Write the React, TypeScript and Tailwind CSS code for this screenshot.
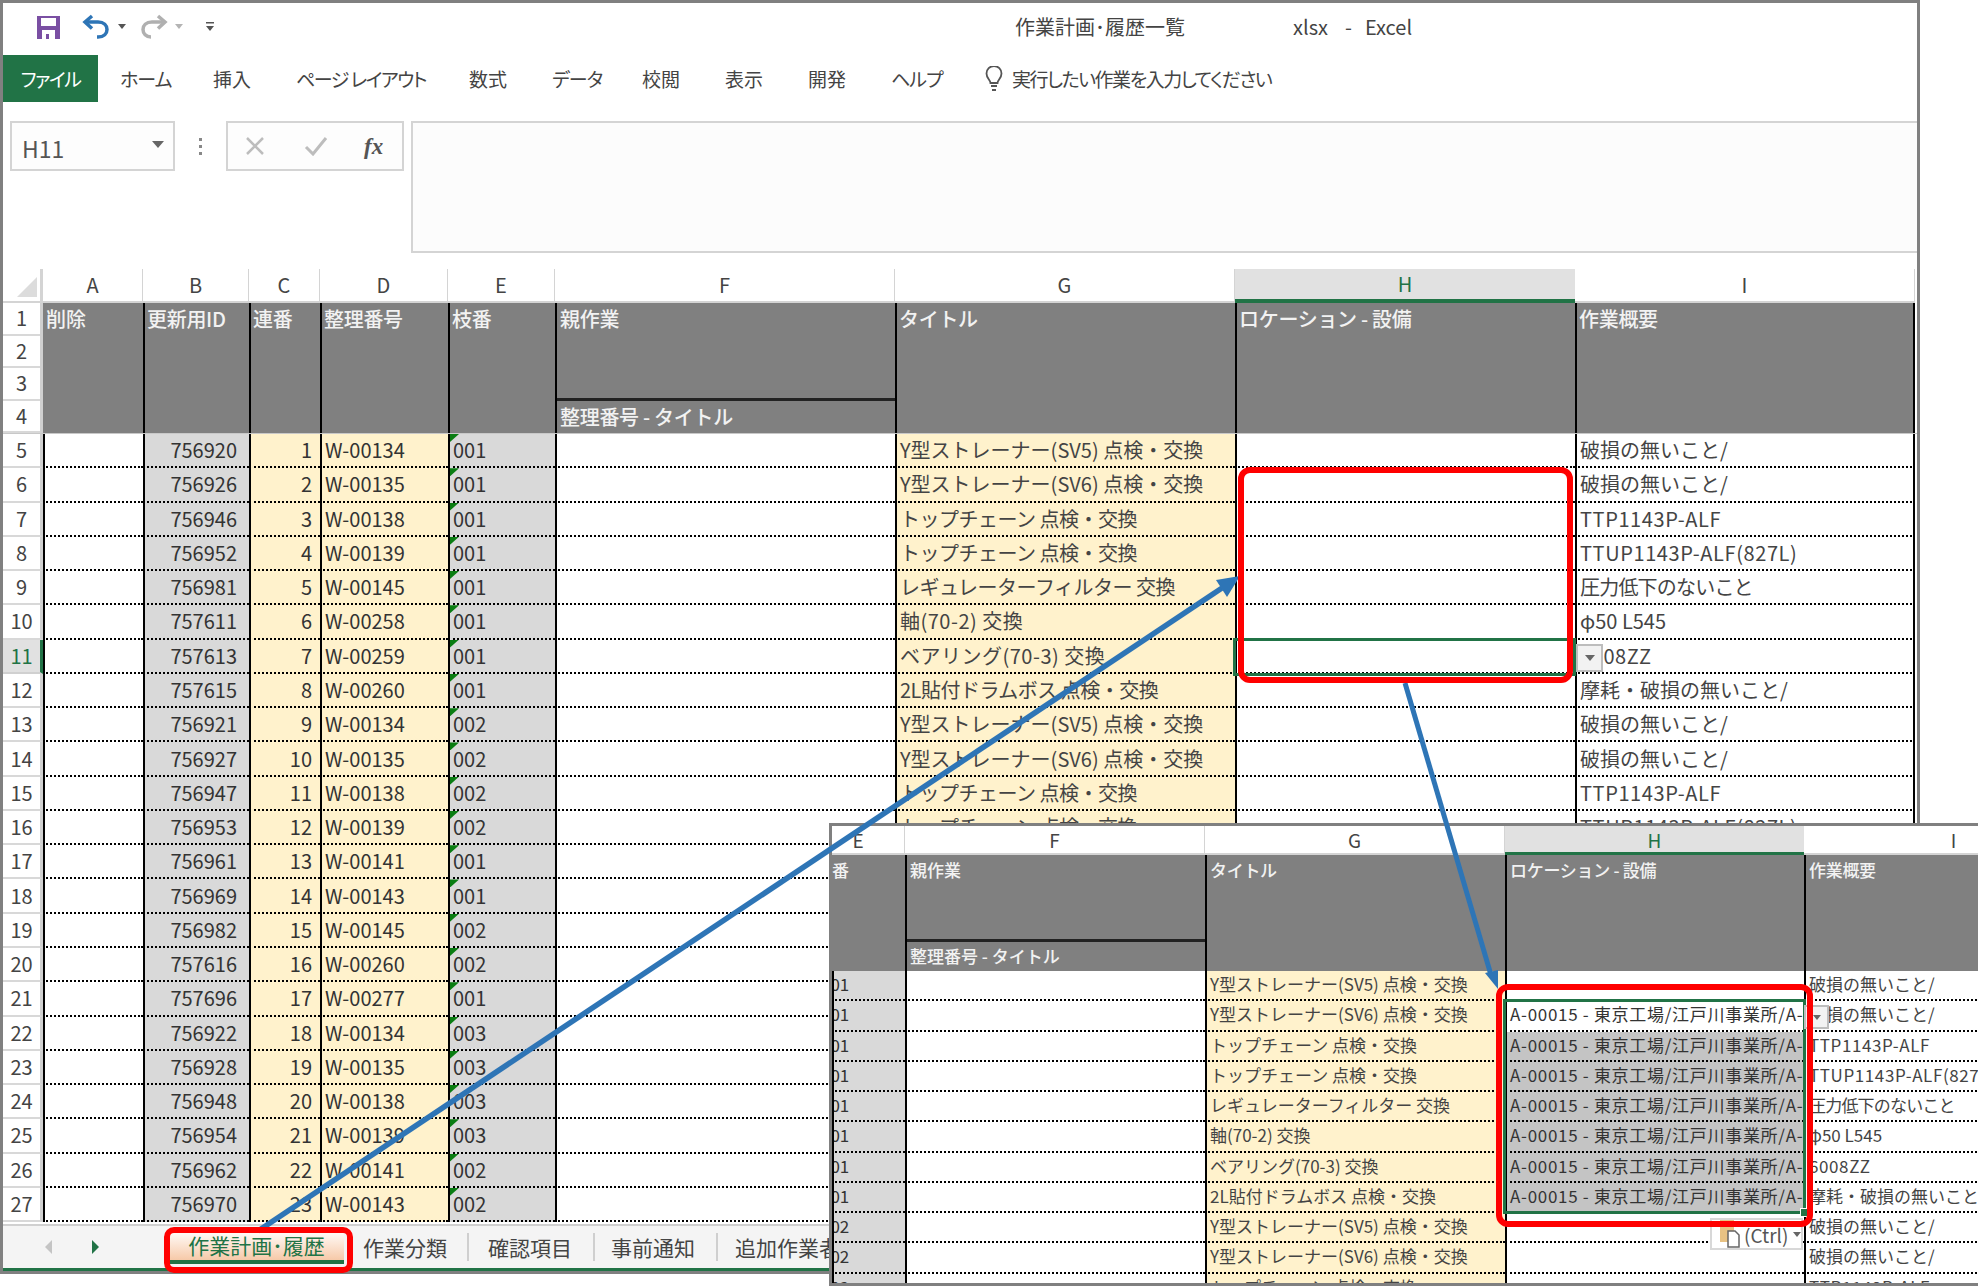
import React from "react";

const SV5 = "Y型ストレーナー(SV5) 点検・交換";
const SV6 = "Y型ストレーナー(SV6) 点検・交換";
const TOP = "トップチェーン 点検・交換";
const REG = "レギュレーターフィルター 交換";
const JIKU = "軸(70-2) 交換";
const BEAR = "ベアリング(70-3) 交換";
const DRUM = "2L貼付ドラムボス 点検・交換";
const OK = "破損の無いこと/";
const TTP = "TTP1143P-ALF";
const TTUP = "TTUP1143P-ALF(827L)";
const ATSU = "圧力低下のないこと";
const PHI = "φ50 L545";
const BRG = "6008ZZ";
const MAMO = "摩耗・破損の無いこと/";
const LOC = "A-00015 - 東京工場/江戸川事業所/A-00001";

const rows: [number, number, string, string, string, string][] = [
  [756920, 1, "W-00134", "001", SV5, OK],
  [756926, 2, "W-00135", "001", SV6, OK],
  [756946, 3, "W-00138", "001", TOP, TTP],
  [756952, 4, "W-00139", "001", TOP, TTUP],
  [756981, 5, "W-00145", "001", REG, ATSU],
  [757611, 6, "W-00258", "001", JIKU, PHI],
  [757613, 7, "W-00259", "001", BEAR, BRG],
  [757615, 8, "W-00260", "001", DRUM, MAMO],
  [756921, 9, "W-00134", "002", SV5, OK],
  [756927, 10, "W-00135", "002", SV6, OK],
  [756947, 11, "W-00138", "002", TOP, TTP],
  [756953, 12, "W-00139", "002", TOP, TTUP],
  [756961, 13, "W-00141", "001", "", ""],
  [756969, 14, "W-00143", "001", "", ""],
  [756982, 15, "W-00145", "002", "", ""],
  [757616, 16, "W-00260", "002", "", ""],
  [757696, 17, "W-00277", "001", "", ""],
  [756922, 18, "W-00134", "003", "", ""],
  [756928, 19, "W-00135", "003", "", ""],
  [756948, 20, "W-00138", "003", "", ""],
  [756954, 21, "W-00139", "003", "", ""],
  [756962, 22, "W-00141", "002", "", ""],
  [756970, 23, "W-00143", "002", "", ""],
];

const menu: [string, string][] = [
  ["ホーム", "w-[49px] tracking-[-1px]"],
  ["挿入", "w-[39px]"],
  ["ページ レイアウト", "w-[129px] tracking-[-1.500px]"],
  ["数式", "w-[39px]"],
  ["データ", "w-[46px] tracking-[-1px]"],
  ["校閲", "w-[39px]"],
  ["表示", "w-[39px]"],
  ["開発", "w-[39px]"],
  ["ヘルプ", "w-[48px] tracking-[-1px]"],
];

const cols = "grid grid-cols-[40px_100px_106px_71px_128px_107px_340px_340px_340px_340px]";
const ocols = "grid grid-cols-[73px_300px_300px_299px_300px]";
const colHead = "flex items-center justify-center border-r border-b-2 border-[#d4d4d4] text-[#444]";
const hdr = "bg-[#808080] border-l-2 border-black text-[#f2f2f2] font-medium px-[2px] [font-feature-settings:normal] tracking-[-0.300px]";
const cell = "border-l-2 border-b-2 border-l-black border-b-black [border-bottom-style:dotted] flex items-center overflow-hidden whitespace-nowrap px-[2px] [font-feature-settings:normal]";

function summaryTracking(t: string) {
  if (t === ATSU) return "tracking-[-0.800px]";
  if (/^[\x00-\x7f]+$/.test(t)) return "tracking-[0.600px]";
  return "";
}

function titleTracking(t: string) {
  if (t.startsWith("Y型")) return "tracking-[0px]";
  if (t.includes("(")) return "tracking-[0.500px]";
  return "tracking-[-0.500px]";
}

function QuickAccess() {
  return (
    <svg width="190" height="26" viewBox="0 0 190 26" className="shrink-0">
      <path d="M0 2h23v23H0z" fill="#7a4fa3" />
      <path d="M4 4h15v8H4z" fill="#fff" />
      <path d="M5 16h13v9H5z" fill="#fff" />
      <path d="M9 20h3v5H9z" fill="#7a4fa3" />
      <path d="M55 2l-7 6 7 6.500" fill="none" stroke="#2e75b6" strokeWidth="3.500" />
      <path d="M49 8h12c6 0 9 3.500 9 7.500s-3 7.500-9 7.500h-1" fill="none" stroke="#2e75b6" strokeWidth="3.500" />
      <path d="M81 10h8l-4 5z" fill="#555" />
      <path d="M121 2l7 6-7 6.500" fill="none" stroke="#b0b0b0" strokeWidth="3.500" />
      <path d="M127 8h-12c-6 0-9 3.500-9 7.500s3 7.500 8 7.500" fill="none" stroke="#b0b0b0" strokeWidth="3.500" />
      <path d="M138 10h8l-4 5z" fill="#b4b4b4" />
      <path d="M169 8h8v1.500h-8zM169 12h8l-4 5z" fill="#555" />
    </svg>
  );
}

function Bulb() {
  return (
    <svg width="20" height="26" viewBox="0 0 20 26" className="shrink-0">
      <path d="M6.500 17c0-3-4-4.500-4-9.500a7.500 7.500 0 0 1 15 0c0 5-4 6.500-4 9.500z" fill="none" stroke="#555" strokeWidth="1.800" />
      <path d="M7 20h6M8 24h4" stroke="#555" strokeWidth="2" />
    </svg>
  );
}

function Row({ r, idx }: { r: (typeof rows)[number]; idx: number }) {
  const n = idx + 5;
  const active = n === 11;
  return (
    <div className={`${cols} h-[34.27px]`}>
      <div className={active
        ? "flex items-center justify-center bg-[#e1e1e1] text-[#217346] border-b-2 border-[#d0d0d0] border-r-[3px] border-r-[#217346]"
        : "flex items-center justify-center text-[#444] border-b-2 border-[#d8d8d8] border-r-[3px] border-r-[#d0d0d0]"}>
        {n}
      </div>
      <div className={`${cell} border-l-0 bg-white`} />
      <div className={`${cell} justify-end bg-[#d9d9d9] text-[#333] pr-[12px]`}>{r[0]}</div>
      <div className={`${cell} justify-end bg-[#fff2cc] text-[#333] pr-[8px]`}>{r[1]}</div>
      <div className={`${cell} bg-[#fff2cc] text-[#333] pl-[3px]`}>{r[2]}</div>
      <div className={`${cell} relative bg-[#d9d9d9] text-[#333] pl-[3px]`}>
        <span className="absolute left-0 top-0 w-[9px] h-[8px] bg-[#0a7d12] [clip-path:polygon(0_0,100%_0,0_100%)]" />
        {r[3]}
      </div>
      <div className={`${cell} bg-white`} />
      <div className={`${cell} bg-[#fff2cc] text-[#444] pl-[3px] ${titleTracking(r[4])}`}>{r[4]}</div>
      <div className={`${cell} bg-white`} />
      <div className={`${cell} bg-white text-[#444] border-r-2 border-r-black pl-[3px] ${summaryTracking(r[5])}`}>{r[5]}</div>
    </div>
  );
}

function OverlayRow({ r, idx }: { r: (typeof rows)[number]; idx: number }) {
  const loc = idx >= 1 && idx <= 7;
  const grey = idx >= 2 && idx <= 7;
  const c = "border-l-2 border-b-2 border-l-black border-b-black [border-bottom-style:dotted] flex items-center overflow-hidden whitespace-nowrap pl-[3px] pb-[3px] [font-feature-settings:normal]";
  return (
    <div className={`${ocols} h-[30.25px]`}>
      <div className={`${c} border-l-0 bg-[#d9d9d9] text-[#333] pl-0`}>
        <span className="-ml-[16px]">{r[3]}</span>
      </div>
      <div className={`${c} bg-white`} />
      <div className={`${c} bg-[#fff2cc] text-[#444]`}>{r[4]}</div>
      <div className={`${c} text-[#333] tracking-[0.700px] ${grey ? "bg-[#c4c4c4]" : "bg-white"}`}>{loc ? LOC : ""}</div>
      <div className={`${c} bg-white text-[#444] ${summaryTracking(r[5])}`}>{r[5]}</div>
    </div>
  );
}

function Overlay() {
  return (
    <div className="absolute left-[829px] top-[823px] w-[1149px] h-[463px] border-y-[3px] border-l-[3px] border-[#808080] bg-white overflow-hidden text-[17px] leading-none">
      <div className={`${ocols} h-[29px]`}>
        <div className={`${colHead} text-[19px] pr-[20px]`}>E</div>
        <div className={`${colHead} text-[19px]`}>F</div>
        <div className={`${colHead} text-[19px]`}>G</div>
        <div className="flex items-center justify-center bg-[#e1e1e1] text-[#217346] border-b-[3px] border-[#217346] text-[19px]">H</div>
        <div className={`${colHead} text-[19px]`}>I</div>
      </div>
      <div className={`${ocols} h-[116px]`}>
        <div className="bg-[#808080] text-[#f2f2f2] font-medium overflow-hidden pt-[6px]">
          <span className="block -ml-[17px] whitespace-nowrap">枝番</span>
        </div>
        <div className="bg-[#808080] border-l-2 border-black text-[#f2f2f2] font-medium flex flex-col [font-feature-settings:normal]">
          <div className="h-[87px] border-b-[3px] border-[#222] px-[3px] pt-[6px]">親作業</div>
          <div className="flex-1 flex items-center px-[3px] pb-[2px]">整理番号 - タイトル</div>
        </div>
        <div className={`${hdr} pl-[3px] pt-[6px]`}>タイトル</div>
        <div className={`${hdr} pl-[3px] pt-[6px]`}>ロケーション - 設備</div>
        <div className={`${hdr} pl-[3px] pt-[6px]`}>作業概要</div>
      </div>
      {rows.slice(0, 11).map((r, i) => (
        <OverlayRow key={i} r={r} idx={i} />
      ))}
    </div>
  );
}

function Annotations() {
  return (
    <svg width="1978" height="1287" viewBox="0 0 1978 1287" className="absolute left-0 top-0 pointer-events-none">
      <line x1="258" y1="1231" x2="1222" y2="588" stroke="#2e75b6" strokeWidth="5.500" />
      <path d="M1240 576l-24 4 11 17z" fill="#2e75b6" />
      <line x1="1405" y1="683" x2="1491" y2="975" stroke="#2e75b6" strokeWidth="5" />
      <path d="M1498 989l-13-16 13-3z" fill="#2e75b6" />
    </svg>
  );
}

export default function App() {
  return (
    <div className="relative w-[1978px] h-[1287px] bg-white overflow-hidden [font-family:'Noto_Sans_CJK_JP','Noto_Sans_CJK_SC',sans-serif] [font-feature-settings:'palt'] text-[20px] leading-none">
      <div className="w-[1920px] h-[1274px] border-[3px] border-[#808080] flex flex-col">
        <div className="h-[52px] flex items-center pl-[34px] pb-[5px] text-[#444] shrink-0">
          <QuickAccess />
          <div className="ml-[788px] flex items-center whitespace-nowrap [font-feature-settings:normal]">
            <span>作業計画･履歴一覧</span>
            <span className="ml-[108px]">xlsx</span>
            <span className="ml-[17px]">-</span>
            <span className="ml-[13px]">Excel</span>
          </div>
        </div>

        <div className="h-[47px] flex items-center text-[19px] text-[#444] shrink-0">
          <div className="w-[95px] h-full bg-[#217346] text-white flex items-center justify-center tracking-[-1.500px]">ファイル</div>
          <div className="flex items-center gap-[44px] ml-[22px]">
            {menu.map(([t, w]) => (
              <span key={t} className={`${w} whitespace-nowrap`}>{t}</span>
            ))}
          </div>
          <div className="flex items-center ml-[45px] gap-[8px]">
            <Bulb />
            <span className="whitespace-nowrap tracking-[-1.500px]">実行したい作業を入力してください</span>
          </div>
        </div>

        <div className="mt-[19px] h-[132px] flex items-start pl-[7px] shrink-0">
          <div className="w-[165px] h-[50px] border-2 border-[#d4d4d4] flex items-center justify-between pl-[10px] pr-[9px] bg-[#fdfdfd]">
            <span className="text-[23px] text-[#555] mt-[4px]">H11</span>
            <span className="w-0 h-0 border-x-[6px] border-x-transparent border-t-[7px] border-t-[#666] -mt-[4px]" />
          </div>
          <div className="w-[51px] h-[50px] flex flex-col items-center justify-center gap-[4px]">
            <span className="w-[3px] h-[3px] bg-[#888]" />
            <span className="w-[3px] h-[3px] bg-[#888]" />
            <span className="w-[3px] h-[3px] bg-[#888]" />
          </div>
          <div className="w-[178px] h-[50px] border-2 border-[#d4d4d4] flex items-center pl-[18px] bg-[#fdfdfd]">
            <svg width="18" height="20" viewBox="0 0 18 20" className="shrink-0"><path d="M1 2l16 16M17 2L1 18" stroke="#bdbdbd" strokeWidth="2.500" /></svg>
            <svg width="24" height="20" viewBox="0 0 24 20" className="shrink-0 ml-[40px]"><path d="M2 11l7 7L22 2" fill="none" stroke="#bdbdbd" strokeWidth="3" /></svg>
            <span className="ml-[36px] font-['Liberation_Serif',serif] italic font-bold text-[23px] text-[#555]">fx</span>
          </div>
          <div className="ml-[7px] w-[1506px] h-[132px] border-2 border-r-0 border-[#d4d4d4] bg-[#fcfcfc]" />
        </div>

        <div className="mt-[16px] flex-1 overflow-hidden">
          <div className={`${cols} h-[34px]`}>
            <div className="relative border-r-[3px] border-b-2 border-[#d4d4d4]">
              <span className="absolute left-[14px] top-[8px] w-[20px] h-[20px] bg-[#dcdcdc] [clip-path:polygon(100%_0,100%_100%,0_100%)]" />
            </div>
            {["A", "B", "C", "D", "E", "F", "G"].map((c) => (
              <div key={c} className={colHead}>{c}</div>
            ))}
            <div className="flex items-center justify-center bg-[#e1e1e1] text-[#217346] border-b-[4px] border-[#217346]">H</div>
            <div className={colHead}>I</div>
          </div>

          <div className={`${cols} h-[131px] border-b border-[#c8c8c8]`}>
            <div className="flex flex-col text-[#444] border-r-[3px] border-[#d0d0d0]">
              {[1, 2, 3, 4].map((n) => (
                <div key={n} className="flex-1 flex items-center justify-center border-b-2 border-[#d8d8d8]">{n}</div>
              ))}
            </div>
            <div className="bg-[#808080] text-[#f2f2f2] font-medium px-[3px] pt-[6px]">削除</div>
            <div className={`${hdr} pt-[6px]`}>更新用ID</div>
            <div className={`${hdr} pt-[6px]`}>連番</div>
            <div className={`${hdr} pt-[6px]`}>整理番号</div>
            <div className={`${hdr} pt-[6px]`}>枝番</div>
            <div className="bg-[#808080] border-l-2 border-black text-[#f2f2f2] font-medium flex flex-col [font-feature-settings:normal] tracking-[-0.300px]">
              <div className="h-[98px] border-b-[3px] border-[#222] px-[3px] pt-[6px]">親作業</div>
              <div className="flex-1 flex items-center px-[3px]">整理番号 - タイトル</div>
            </div>
            <div className={`${hdr} pt-[6px]`}>タイトル</div>
            <div className={`${hdr} pt-[6px]`}>ロケーション - 設備</div>
            <div className={`${hdr} border-r-2 pt-[6px]`}>作業概要</div>
          </div>

          {rows.map((r, i) => (
            <Row key={i} r={r} idx={i} />
          ))}
        </div>

        <div className="h-[47px] shrink-0 bg-[#f4f4f4] border-t-2 border-[#d0d0d0] border-b-[3px] border-b-[#217346] flex items-center text-[#444] text-[21px]">
          <div className="w-[166px] flex items-center pl-[42px] gap-[40px]">
            <span className="w-0 h-0 border-y-[7px] border-y-transparent border-r-[7px] border-r-[#c4c4c4]" />
            <span className="w-0 h-0 border-y-[7px] border-y-transparent border-l-[7px] border-l-[#217346]" />
          </div>
          <div className="w-[175px] h-[34px] flex items-center justify-center text-[#217346] border-b-[4px] border-[#217346] bg-gradient-to-b from-white to-[#f6c9a8] whitespace-nowrap [font-feature-settings:normal]">作業計画･履歴</div>
          <span className="ml-[19px] w-[86px] whitespace-nowrap">作業分類</span>
          <span className="ml-[18px] h-[28px] border-l-2 border-[#cfcfcf]" />
          <span className="ml-[19px] w-[86px] whitespace-nowrap">確認項目</span>
          <span className="ml-[19px] h-[28px] border-l-2 border-[#cfcfcf]" />
          <span className="ml-[16px] w-[86px] whitespace-nowrap">事前通知</span>
          <span className="ml-[19px] h-[28px] border-l-2 border-[#cfcfcf]" />
          <span className="ml-[17px] whitespace-nowrap">追加作業者</span>
        </div>
      </div>

      {/* active cell H11 in the main sheet */}
      <div className="absolute left-[1233px] top-[638px] w-[343px] h-[38px] border-[3px] border-[#217346]" />
      <div className="absolute left-[1576px] top-[644px] w-[27px] h-[28px] border-2 border-[#bdbdbd] bg-[#f2f2f2] flex items-center justify-center">
        <span className="w-0 h-0 border-x-[5px] border-x-transparent border-t-[6px] border-t-[#666]" />
      </div>

      <Overlay />

      {/* selection in the overlay */}
      <div className="absolute left-[1503px] top-[999px] w-[303px] h-[215px] border-[3px] border-[#217346]" />
      <div className="absolute left-[1800px] top-[1208px] w-[8px] h-[9px] bg-[#217346] border border-white" />
      <div className="absolute left-[1804px] top-[1005px] w-[25px] h-[24px] border-2 border-[#bdbdbd] bg-[#f2f2f2] flex items-center justify-center">
        <span className="w-0 h-0 border-x-[4px] border-x-transparent border-t-[5px] border-t-[#666]" />
      </div>
      <div className="absolute left-[1710px] top-[1218px] w-[93px] h-[32px] border-2 border-[#d8d8d8] bg-white flex items-center pl-[7px] gap-[3px] text-[19px] text-[#555] leading-none">
        <svg width="22" height="28" viewBox="0 0 22 28" className="shrink-0">
          <path d="M1 0h14v22H1z" fill="#e8c283" />
          <path d="M9 11h7l4 4v12H9z" fill="#fff" stroke="#666" strokeWidth="1.500" />
        </svg>
        <span className="[font-feature-settings:normal]">(Ctrl)</span>
        <span className="w-0 h-0 ml-[2px] border-x-[4px] border-x-transparent border-t-[5px] border-t-[#666]" />
      </div>

      <Annotations />

      {/* red highlight frames */}
      <div className="absolute left-[164px] top-[1227px] w-[189px] h-[46px] border-[6px] border-[#ff0000] rounded-[10px]" />
      <div className="absolute left-[1238px] top-[467px] w-[335px] h-[216px] border-[6px] border-[#ff0000] rounded-[12px]" />
      <div className="absolute left-[1496px] top-[984px] w-[317px] h-[243px] border-[6px] border-[#ff0000] rounded-[12px]" />
    </div>
  );
}
